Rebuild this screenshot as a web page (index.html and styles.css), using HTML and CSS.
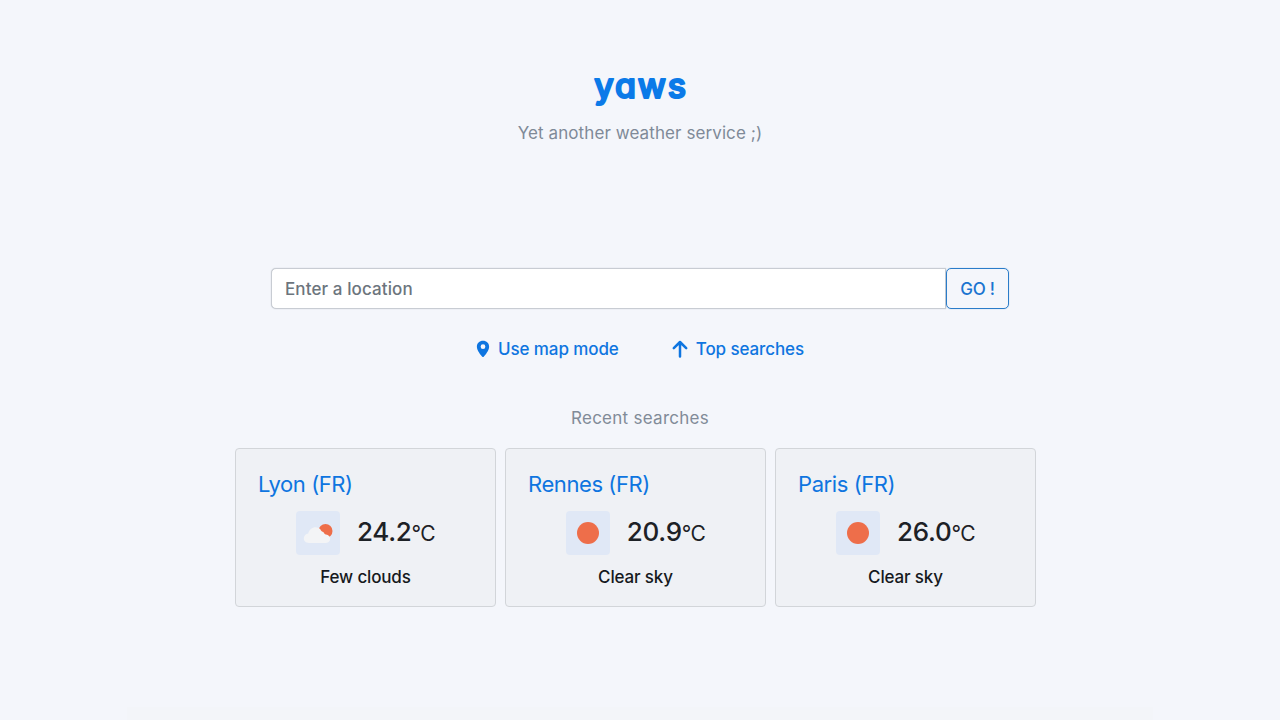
FILE: index.html
```html
<!DOCTYPE html>
<html lang="en">
<head>
<meta charset="utf-8">
<title>yaws</title>
<link rel="stylesheet" href="styles.css">
</head>
<body>
<div class="page">
  <header class="header">
    <h1 class="logo"><svg class="logo-svg" viewBox="0 0 100 46" width="100" height="46"><text class="logo-text" x="51" y="35" text-anchor="middle">yaws</text></svg></h1>
    <p class="tagline">Yet another weather service ;)</p>
  </header>
  <form class="search">
    <input class="search-input" type="text" placeholder="Enter a location">
    <button class="search-btn" type="button">GO !</button>
  </form>
  <nav class="links">
    <a class="link" href="#">
      <svg class="link-icon" viewBox="0 0 16 20" width="14" height="18"><path fill="currentColor" fill-rule="evenodd" d="M8 0.5C3.900 0.500 1 3.500 1 7.300c0 4.400 4.600 9.600 6.200 11.500.4.500 1.200.500 1.600 0C10.400 16.900 15 11.700 15 7.300 15 3.500 12.100 0.500 8 0.500zM8 4.700a2.700 2.700 0 1 1 0 5.400 2.700 2.700 0 0 1 0-5.400z"/></svg>
      Use map mode
    </a>
    <a class="link" href="#">
      <svg class="link-icon" viewBox="0 0 16 18" width="16" height="18"><path fill="none" stroke="currentColor" stroke-width="2.500" stroke-linecap="round" stroke-linejoin="round" d="M8 16.500V2M1.800 8.200L8 2l6.200 6.200"/></svg>
      Top searches
    </a>
  </nav>
  <h2 class="recent-title">Recent searches</h2>
  <section class="cards">
    <article class="card">
      <h3 class="city">Lyon (FR)</h3>
      <div class="weather">
        <div class="icon-box">
          <svg viewBox="0 0 32 24" width="32" height="24">
            <circle cx="23.500" cy="10" r="7" fill="#ee6e4a"/>
            <path fill="#f3f4f6" d="M6.800 22C3.800 22 1.800 20 1.800 17.300c0-2.500 1.800-4.500 4.400-4.900C7.200 8.700 10.200 6.200 13.500 6.200c2 0 3.800.8 5 2.200.5 1.600 1.700 2.300 2.900 2.600.4 1.200 1.200 2.100 2.600 2.600 2.500.4 4.200 2 4.200 4.100 0 2.400-2 4.300-4.700 4.300z"/>
          </svg>
        </div>
        <div class="temp">24.2<span class="unit">°C</span></div>
      </div>
      <p class="desc">Few clouds</p>
    </article>
    <article class="card">
      <h3 class="city">Rennes (FR)</h3>
      <div class="weather">
        <div class="icon-box"><span class="sun"></span></div>
        <div class="temp">20.9<span class="unit">°C</span></div>
      </div>
      <p class="desc">Clear sky</p>
    </article>
    <article class="card">
      <h3 class="city">Paris (FR)</h3>
      <div class="weather">
        <div class="icon-box"><span class="sun"></span></div>
        <div class="temp">26.0<span class="unit">°C</span></div>
      </div>
      <p class="desc">Clear sky</p>
    </article>
  </section>
</div>
<div class="footer-strip"></div>
</body>
</html>
```
FILE: styles.css
```css
* { box-sizing: border-box; }
html, body { height: 100%; }
body {
  margin: 0;
  background: #f4f6fb;
  font-family: "Inter", "Noto Sans", sans-serif;
  overflow: hidden;
  display: flex;
  flex-direction: column;
  align-items: center;
}
.page {
  width: 810px;
  height: 707px;
  display: flex;
  flex-direction: column;
  align-items: center;
  flex: none;
}
.header { text-align: center; padding-top: 63px; height: 268px; flex: none; }
.logo { margin: 0; height: 46px; line-height: 0; }
.logo-svg { display: inline-block; }
.logo-text {
  font-family: "Inter", sans-serif;
  font-size: 34px;
  font-weight: 500;
  font-feature-settings: "cv11" 1;
  letter-spacing: 1.8px;
  fill: #0b7ae8;
  stroke: #0b7ae8;
  stroke-width: 2px;
  stroke-linejoin: round;
  stroke-linecap: round;
}
.tagline {
  margin: 12px 0 0;
  font-size: 17px;
  line-height: 24px;
  font-weight: 400;
  color: #7f8a98;
  letter-spacing: 0.09px;
}
.search { display: flex; width: 738px; height: 41px; flex: none; margin: 0; }
.search-input {
  flex: 1;
  min-width: 0;
  height: 100%;
  padding: 0 13px;
  border: 1px solid #c8ccd3;
  border-radius: 5px 0 0 5px;
  background: #fff;
  box-shadow: 0 0 1px rgba(120, 128, 140, 0.5);
  font: inherit;
  font-size: 17px;
  font-weight: 450;
  letter-spacing: 0.1px;
  outline: none;
}
.search-input::placeholder { color: #6c757d; opacity: 1; }
.search-btn {
  width: 63px;
  height: 100%;
  padding: 0;
  border: 1px solid #2a7cc9;
  border-radius: 5px;
  background: transparent;
  box-shadow: 0 0 1px rgba(42, 124, 201, 0.6);
  color: #1a74d0;
  font: inherit;
  font-size: 17px;
  font-weight: 450;
  letter-spacing: -0.2px;
}
.links { display: flex; gap: 53px; margin-top: 28px; height: 24px; flex: none; }
.link {
  display: flex;
  align-items: center;
  gap: 8px;
  color: #0e75e0;
  font-size: 17px;
  font-weight: 500;
  letter-spacing: -0.1px;
  line-height: 24px;
  text-decoration: none;
}
.link-icon { flex: none; }
.recent-title {
  margin: 45px 0 0;
  font-size: 17px;
  line-height: 24px;
  font-weight: 400;
  letter-spacing: 0.27px;
  color: #818b98;
}
.cards {
  display: flex;
  gap: 9px;
  width: 810px;
  padding-right: 9px;
  margin-top: 18px;
}
.card {
  flex: 1;
  height: 159px;
  padding: 20px 22px 0;
  background: #eff1f5;
  border: 1px solid #d2d5d9;
  border-radius: 4px;
}
.city {
  margin: 0;
  font-size: 22px;
  line-height: 30px;
  font-weight: 400;
  letter-spacing: -0.42px;
  color: #0e75e0;
}
.weather { display: flex; justify-content: center; align-items: center; gap: 17px; margin-top: 11px; }
.icon-box {
  width: 44px;
  height: 44px;
  display: flex;
  align-items: center;
  justify-content: center;
  background: #e0e8f6;
  border-radius: 4px;
  flex: none;
}
.sun { width: 22px; height: 22px; border-radius: 50%; background: #ee6e4a; }
.temp { font-size: 26px; line-height: 44px; font-weight: 450; color: #1d2126; letter-spacing: -0.3px; }
.unit { font-size: 21px; font-weight: 400; letter-spacing: -0.6px; }
.desc { margin: 9px 0 0; text-align: center; font-size: 17px; line-height: 24px; font-weight: 450; letter-spacing: -0.15px; color: #16191d; }
.footer-strip { width: 1026px; height: 13px; flex: none; background: #f3f5f9; }
```
